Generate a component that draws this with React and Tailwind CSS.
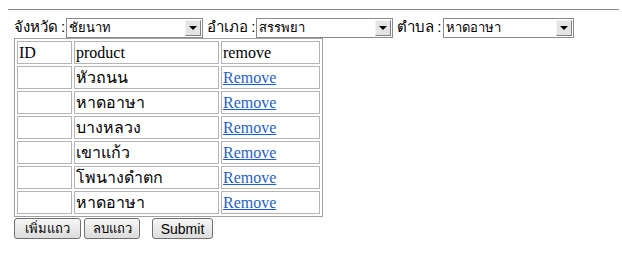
import { useState } from "react"

const thaiFont = "font-['Tahoma','Liberation_Sans','Noto_Sans',sans-serif]"

function FakeSelect({ value, width }) {
    return (
        <div className={`flex items-stretch h-[20px] ${width} border border-[#8a8a8a] bg-white`}>
            <div className={`flex-1 flex items-center pl-[2px] text-[13px] leading-none text-black ${thaiFont}`}>
                {value}
            </div>
            <div className="w-[16px] my-[1px] mr-[1px] flex items-center justify-center bg-[#e4e4e4] border border-t-[#f4f4f4] border-l-[#f4f4f4] border-r-[#808080] border-b-[#808080]">
                <span className="w-0 h-0 border-l-[4px] border-r-[4px] border-t-[4px] border-l-transparent border-r-transparent border-t-black" />
            </div>
        </div>
    )
}

function Label({ text, className }) {
    return (
        <span className={`flex items-center pr-px ${className}`}>
            {text}
            <span className="ml-[3px]">:</span>
        </span>
    )
}

export default function App() {
    const [rows] = useState([
        "หัวถนน",
        "หาดอาษา",
        "บางหลวง",
        "เขาแก้ว",
        "โพนางดำตก",
        "หาดอาษา",
    ]);

    return (
        <div className="w-[622px] h-[268px] bg-white text-black">
            {/* top rule */}
            <div className="pt-[9px] pl-[8px] pr-[3px]">
                <div className="h-px bg-[#8c8c8c]" />
            </div>

            <div className="pl-[14px] pt-[7px]">
                {/* province / district / subdistrict */}
                <div className={`flex items-center h-[21px] text-[15px] ${thaiFont}`}>
                    <Label text="จังหวัด" className="" />
                    <FakeSelect value="ชัยนาท" width="w-[137px]" />
                    <Label text="อำเภอ" className="pl-[4px]" />
                    <FakeSelect value="สรรพยา" width="w-[137px]" />
                    <Label text="ตำบล" className="pl-[4px]" />
                    <FakeSelect value="หาดอาษา" width="w-[131px]" />
                </div>

                <table className="border-separate border-spacing-[2px] border border-[#a0a0a0]">
                    <thead>
                        <tr className="h-[23px]">
                            <th className="w-[55px] h-[23px] border border-[#b4b4b4] px-px text-left font-normal text-[16px] leading-none font-['Liberation_Serif',serif]">ID</th>
                            <th className="w-[145px] h-[23px] border border-[#b4b4b4] px-px text-left font-normal text-[16px] leading-none font-['Liberation_Serif',serif]">product</th>
                            <th className="w-[99px] h-[23px] border border-[#b4b4b4] px-px text-left font-normal text-[16px] leading-none font-['Liberation_Serif',serif]">remove</th>
                        </tr>
                    </thead>
                    <tbody>
                        {rows.map((name, index) => (
                            <tr key={index} className="h-[23px]">
                                <td className="h-[23px] border border-[#b4b4b4] px-px"></td>
                                <td className={`h-[23px] border border-[#b4b4b4] px-px text-[16px] leading-none ${thaiFont}`}>{name}</td>
                                <td className="h-[23px] border border-[#b4b4b4] px-px text-[16px] leading-none font-['Liberation_Serif',serif]">
                                    <a href="#" className="text-[#1f5fbf] underline">Remove</a>
                                </td>
                            </tr>
                        ))}
                    </tbody>
                </table>

                {/* buttons */}
                <div className="flex items-center mt-px text-[13px]">
                    <button className={`h-[21px] w-[67px] rounded-[3px] border border-[#707070] bg-gradient-to-b from-[#f6f6f6] to-[#dcdcdc] ${thaiFont}`}>เพิ่มแถว</button>
                    <button className={`ml-[3px] h-[21px] w-[56px] rounded-[3px] border border-[#707070] bg-gradient-to-b from-[#f6f6f6] to-[#dcdcdc] ${thaiFont}`}>ลบแถว</button>
                    <button className="ml-[12px] h-[21px] w-[61px] rounded-[3px] border border-[#707070] bg-gradient-to-b from-[#f6f6f6] to-[#dcdcdc] text-[14px] font-['Liberation_Sans',sans-serif]">Submit</button>
                </div>
            </div>
        </div>
    )
}
